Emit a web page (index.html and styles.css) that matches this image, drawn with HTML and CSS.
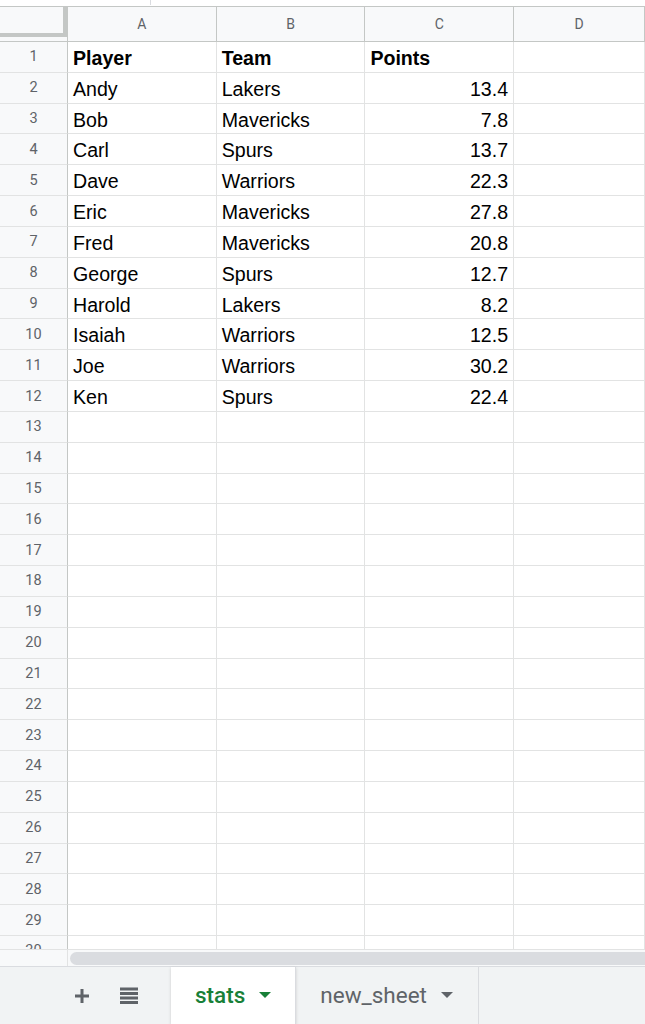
FILE: index.html
```html
<!DOCTYPE html>
<html lang="en">
<head>
    <meta charset="UTF-8">
    <meta name="viewport" content="width=device-width, initial-scale=1.0">
    <title>stats - Sheet</title>
    <link rel="stylesheet" href="styles.css">
</head>
<body>
    <div class="topbar"><span class="tick"></span></div>

    <div class="sheet">
        <div class="corner"><div class="freeze"></div></div>
        <div class="ch">A</div>
        <div class="ch">B</div>
        <div class="ch">C</div>
        <div class="ch">D</div>

        <div class="rh">1</div><div class="c b">Player</div><div class="c b">Team</div><div class="c b">Points</div><div class="c"></div>
        <div class="rh">2</div><div class="c">Andy</div><div class="c">Lakers</div><div class="c n">13.4</div><div class="c"></div>
        <div class="rh">3</div><div class="c">Bob</div><div class="c">Mavericks</div><div class="c n">7.8</div><div class="c"></div>
        <div class="rh">4</div><div class="c">Carl</div><div class="c">Spurs</div><div class="c n">13.7</div><div class="c"></div>
        <div class="rh">5</div><div class="c">Dave</div><div class="c">Warriors</div><div class="c n">22.3</div><div class="c"></div>
        <div class="rh">6</div><div class="c">Eric</div><div class="c">Mavericks</div><div class="c n">27.8</div><div class="c"></div>
        <div class="rh">7</div><div class="c">Fred</div><div class="c">Mavericks</div><div class="c n">20.8</div><div class="c"></div>
        <div class="rh">8</div><div class="c">George</div><div class="c">Spurs</div><div class="c n">12.7</div><div class="c"></div>
        <div class="rh">9</div><div class="c">Harold</div><div class="c">Lakers</div><div class="c n">8.2</div><div class="c"></div>
        <div class="rh">10</div><div class="c">Isaiah</div><div class="c">Warriors</div><div class="c n">12.5</div><div class="c"></div>
        <div class="rh">11</div><div class="c">Joe</div><div class="c">Warriors</div><div class="c n">30.2</div><div class="c"></div>
        <div class="rh">12</div><div class="c">Ken</div><div class="c">Spurs</div><div class="c n">22.4</div><div class="c"></div>
        <div class="rh">13</div><div class="c"></div><div class="c"></div><div class="c"></div><div class="c"></div>
        <div class="rh">14</div><div class="c"></div><div class="c"></div><div class="c"></div><div class="c"></div>
        <div class="rh">15</div><div class="c"></div><div class="c"></div><div class="c"></div><div class="c"></div>
        <div class="rh">16</div><div class="c"></div><div class="c"></div><div class="c"></div><div class="c"></div>
        <div class="rh">17</div><div class="c"></div><div class="c"></div><div class="c"></div><div class="c"></div>
        <div class="rh">18</div><div class="c"></div><div class="c"></div><div class="c"></div><div class="c"></div>
        <div class="rh">19</div><div class="c"></div><div class="c"></div><div class="c"></div><div class="c"></div>
        <div class="rh">20</div><div class="c"></div><div class="c"></div><div class="c"></div><div class="c"></div>
        <div class="rh">21</div><div class="c"></div><div class="c"></div><div class="c"></div><div class="c"></div>
        <div class="rh">22</div><div class="c"></div><div class="c"></div><div class="c"></div><div class="c"></div>
        <div class="rh">23</div><div class="c"></div><div class="c"></div><div class="c"></div><div class="c"></div>
        <div class="rh">24</div><div class="c"></div><div class="c"></div><div class="c"></div><div class="c"></div>
        <div class="rh">25</div><div class="c"></div><div class="c"></div><div class="c"></div><div class="c"></div>
        <div class="rh">26</div><div class="c"></div><div class="c"></div><div class="c"></div><div class="c"></div>
        <div class="rh">27</div><div class="c"></div><div class="c"></div><div class="c"></div><div class="c"></div>
        <div class="rh">28</div><div class="c"></div><div class="c"></div><div class="c"></div><div class="c"></div>
        <div class="rh">29</div><div class="c"></div><div class="c"></div><div class="c"></div><div class="c"></div>
        <div class="rh">30</div><div class="c"></div><div class="c"></div><div class="c"></div><div class="c"></div>
    </div>

    <div class="hscroll">
        <div class="hs-left"></div>
        <div class="thumb"></div>
    </div>

    <div class="tabs">
        <div class="tab-tools">
            <svg class="icon" width="16" height="16" viewBox="0 0 16 16">
                <path d="M6.5 1h3v5.5H15v3H9.5V15h-3V9.5H1v-3h5.5z" fill="#5f6368"/>
            </svg>
            <svg class="icon" width="18" height="18" viewBox="0 0 18 18">
                <rect x="0" y="0.5" width="18" height="3" fill="#5f6368"/>
                <rect x="0" y="5" width="18" height="3" fill="#5f6368"/>
                <rect x="0" y="9.5" width="18" height="3" fill="#5f6368"/>
                <rect x="0" y="14" width="18" height="3" fill="#5f6368"/>
            </svg>
        </div>
        <div class="tab active">
            <span>stats</span>
            <span class="arrow"></span>
        </div>
        <div class="tab">
            <span>new_sheet</span>
            <span class="arrow"></span>
        </div>
        <div class="tab-rest"></div>
    </div>
</body>
</html>
```

FILE: styles.css
```css
body {
    margin: 0;
    width: 645px;
    height: 1024px;
    overflow: hidden;
    background: #fff;
    font-family: "Liberation Sans", Arial, sans-serif;
    display: flex;
    flex-direction: column;
}
.topbar {
    height: 6px;
    flex: none;
    border-bottom: 1px solid #c4c7c5;
    padding-left: 150px;
}
.tick {
    display: block;
    width: 1px;
    height: 5px;
    background: #dadce0;
}
.sheet {
    display: grid;
    grid-template-columns: 68px 148.7px 148.7px 148.7px 1fr;
    grid-template-rows: 35px;
    grid-auto-rows: 30.83px;
    height: 942px;
    overflow: hidden;
    flex: none;
}
.corner {
    background: #f8f9fa;
    border-right: 1px solid #c4c7c5;
    border-bottom: 1px solid #c4c7c5;
}
.freeze {
    width: 63px;
    height: 26px;
    border-right: 4px solid #c4c7c5;
    border-bottom: 4px solid #c4c7c5;
}
.ch {
    background: #f8f9fa;
    border-right: 1px solid #c4c7c5;
    border-bottom: 1px solid #c4c7c5;
    display: flex;
    align-items: center;
    justify-content: center;
    font-family: Roboto, "Liberation Sans", sans-serif;
    font-size: 14px;
    color: #5f6368;
}
.rh {
    background: #f8f9fa;
    border-right: 1px solid #c4c7c5;
    border-bottom: 1px solid #e2e3e3;
    display: flex;
    align-items: center;
    justify-content: center;
    font-family: Roboto, "Liberation Sans", sans-serif;
    font-size: 14.5px;
    color: #5f6368;
}
.c {
    border-right: 1px solid #e2e3e3;
    border-bottom: 1px solid #e2e3e3;
    display: flex;
    align-items: center;
    padding: 3px 5px 0 5px;
    font-size: 19.6px;
    color: #000;
    white-space: nowrap;
    overflow: hidden;
}
.b {
    font-weight: bold;
}
.n {
    justify-content: flex-end;
}
.hscroll {
    height: 16px;
    flex: none;
    display: flex;
    align-items: center;
    background: #f8f9fa;
    border-top: 1px solid #e2e3e3;
}
.hs-left {
    width: 67px;
    height: 100%;
    border-right: 1px solid #e2e3e3;
}
.thumb {
    flex: 1;
    height: 13px;
    margin-left: 2px;
    margin-right: -20px;
    border-radius: 7px;
    background: #dadce0;
}
.tabs {
    flex: 1;
    display: flex;
    background: #f1f3f4;
    border-top: 1px solid #dadce0;
    font-family: Roboto, "Liberation Sans", sans-serif;
}
.tab-tools {
    width: 171px;
    display: flex;
    align-items: center;
    padding-left: 74px;
    gap: 30px;
    box-sizing: border-box;
}
.icon {
    display: block;
}
.tab {
    display: flex;
    align-items: center;
    padding: 0 25px 2px 24px;
    gap: 14px;
    font-size: 22.5px;
    color: #5f6368;
    border-right: 1px solid #dadce0;
}
.tab.active {
    background: #fff;
    color: #188038;
    font-weight: 500;
    padding-right: 24px;
    box-shadow: 0 1px 3px rgba(60, 64, 67, 0.2);
}
.arrow {
    width: 0;
    height: 0;
    border-left: 6px solid transparent;
    border-right: 6px solid transparent;
    border-top: 6px solid #5f6368;
}
.tab.active .arrow {
    border-top-color: #188038;
}
.tab-rest {
    flex: 1;
}
```
